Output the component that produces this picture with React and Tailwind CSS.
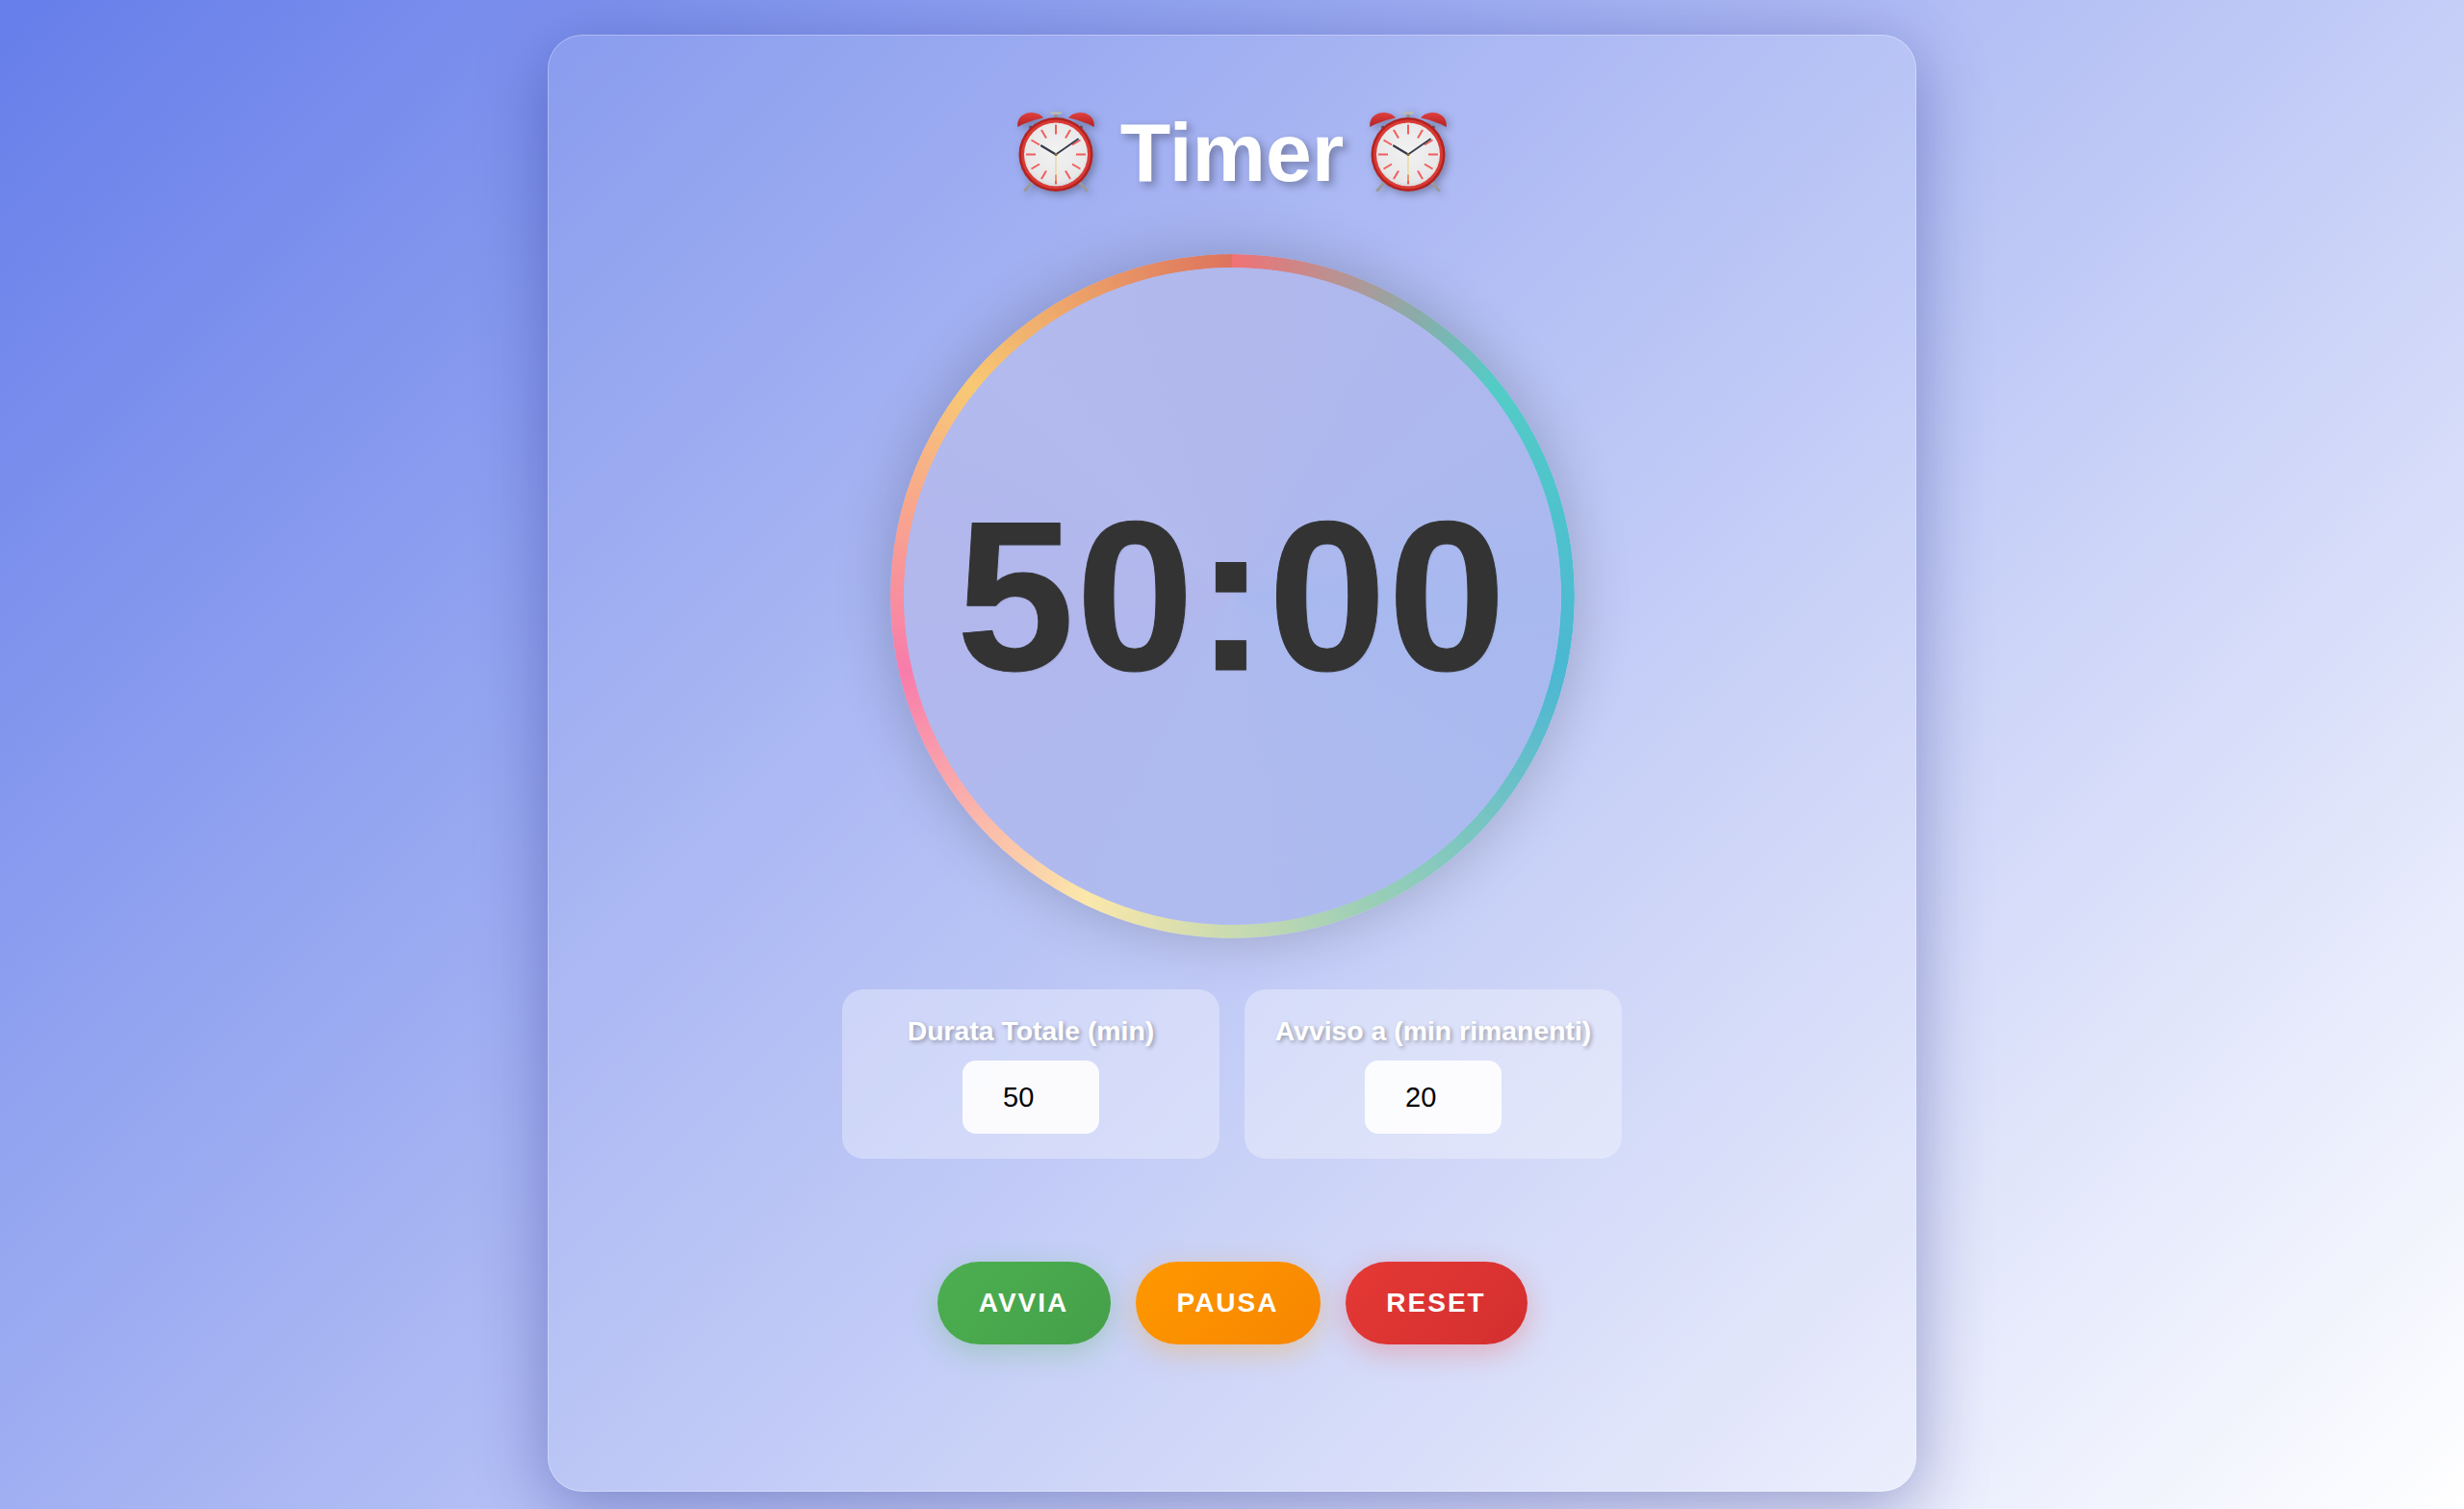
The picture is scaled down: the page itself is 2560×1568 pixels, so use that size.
const AlarmClock = () => (
  <svg viewBox="0 0 80 83" className="w-[80px] h-[83px] shrink-0 -mt-[3px] drop-shadow-[3px_3px_4px_rgba(0,0,0,0.3)]">
    <defs>
      <radialGradient id="face" cx="0.5" cy="0.45" r="0.6">
        <stop offset="0" stopColor="#f2f2f2" />
        <stop offset="0.8" stopColor="#e8e8e8" />
        <stop offset="1" stopColor="#d0d0d0" />
      </radialGradient>
      <linearGradient id="bell" x1="0" y1="0" x2="0" y2="1">
        <stop offset="0" stopColor="#e2403e" />
        <stop offset="1" stopColor="#b02224" />
      </linearGradient>
    </defs>
    <path d="M15.7 73 L8 82" stroke="#9a9a9a" strokeWidth="3" strokeLinecap="round" />
    <path d="M64.3 73 L72 82" stroke="#9a9a9a" strokeWidth="3" strokeLinecap="round" />
    <rect x="34.5" y="0" width="11" height="3" fill="#b8b8b8" />
    <rect x="38.5" y="3" width="3" height="5" fill="#8f8f8f" />
    <path d="M13 15 L16 20" stroke="#555" strokeWidth="3" />
    <path d="M67 15 L64 20" stroke="#555" strokeWidth="3" />
    <path d="M0.5 16 C-1.5 6 8 0 16 1 C21 1.5 25 3.5 27 6.5 C19 8 8 11.5 0.5 16 Z" fill="url(#bell)" />
    <path d="M79.5 16 C81.5 6 72 0 64 1 C59 1.5 55 3.5 53 6.5 C61 8 72 11.5 79.5 16 Z" fill="url(#bell)" />
    <circle cx="40" cy="44.5" r="38.5" fill="#b3231f" />
    <circle cx="40" cy="44.5" r="36" fill="#d93a36" />
    <circle cx="40" cy="44.5" r="33" fill="url(#face)" />
    <g stroke="#f25c5c" strokeWidth="2">
      <path d="M40 13.5 V23.5" />
      <path d="M40 65.5 V75.5" />
      <path d="M9 44.5 H19" />
      <path d="M61 44.5 H71" />
      <path d="M25 19 L30 27.5" />
      <path d="M55 19 L50 27.5" />
      <path d="M25 70 L30 61.5" />
      <path d="M55 70 L50 61.5" />
      <path d="M14.5 29.5 L23 34.5" />
      <path d="M65.5 29.5 L57 34.5" />
      <path d="M14.5 59.5 L23 54.5" />
      <path d="M65.5 59.5 L57 54.5" />
    </g>
    <path d="M40 44.5 V72" stroke="#e8cf7a" strokeWidth="1" />
    <path d="M40 44.5 L25 35.5" stroke="#333a4a" strokeWidth="2.2" strokeLinecap="round" />
    <path d="M40 44.5 L63 28.5" stroke="#333a4a" strokeWidth="1.8" strokeLinecap="round" />
    <circle cx="40" cy="44.5" r="1.6" fill="#8a6a3a" />
  </svg>
)

const Field = ({ label, value }) => (
  <div className="w-[392px] h-[176px] pt-[27px] flex flex-col items-center bg-white/[0.32] rounded-[22px]">
    <label className="text-[28.4px] leading-[32px] font-bold text-white [text-shadow:2px_2px_4px_rgba(0,0,0,0.3)]">{label}</label>
    <input
      type="number"
      defaultValue={value}
      className="mt-[15px] w-[142px] h-[76px] pl-[42px] rounded-[14px] bg-white/90 text-[29px] text-black outline-none"
    />
  </div>
)

const Btn = ({ label, className }) => (
  <button className={`h-[86px] rounded-full text-[28px] font-bold tracking-[2px] text-white flex items-center justify-center ${className}`}>
    {label}
  </button>
)

export default function App() {
  return (
    <div className="h-screen overflow-hidden flex justify-center pt-[36px] bg-[linear-gradient(135deg,#667eea_0%,#ffffff_100%)] font-['Liberation_Sans',Arial,sans-serif]">
      <div className="w-[1422px] h-[1514px] pt-[71px] flex flex-col items-center rounded-[36px] border border-white/30 bg-white/10 shadow-[0_16px_72px_rgba(31,38,135,0.4)]">
        <h1 className="h-[101px] flex items-center justify-center gap-[27px] text-[86px] font-bold text-white [text-shadow:4px_4px_8px_rgba(0,0,0,0.3)]">
          <AlarmClock />
          <span>Timer</span>
          <AlarmClock />
        </h1>

        <div className="relative mt-[55px] w-[711px] h-[711px] rounded-full flex items-center justify-center shadow-[0_0_60px_rgba(0,0,0,0.2)]">
          <div className="absolute inset-0 rounded-full opacity-95 bg-[conic-gradient(#f56f6f,#4ecdc4,#45b7d1,#96ceb4,#ffeaa7,#fd79a8,#fdcb6e,#e17055)] [mask:radial-gradient(closest-side,transparent_calc(100%-14.5px),black_calc(100%-14px))]" />
          <div className="absolute inset-[14px] rounded-full bg-[conic-gradient(#b1b8ec,#aeb8ee_45deg,#a8b9ef_90deg,#abbaef_135deg,#afbbef_180deg,#b0b9ee_225deg,#b2b7ec_270deg,#b2baee_315deg,#b1b8ec)]" />
          <span className="relative text-[220px] leading-none font-bold tracking-[2px] text-[#333] [-webkit-text-stroke:1px_#333] [text-shadow:1px_1px_2px_rgba(0,0,0,0.1)]">50:00</span>
        </div>

        <div className="mt-[53px] flex gap-[26px]">
          <Field label="Durata Totale (min)" value={50} />
          <Field label="Avviso a (min rimanenti)" value={20} />
        </div>

        <div className="mt-[107px] flex gap-[26px]">
          <Btn label="AVVIA" className="w-[180px] bg-[linear-gradient(135deg,#4caf50,#45a049)] shadow-[0_8px_30px_rgba(76,175,80,0.3)]" />
          <Btn label="PAUSA" className="w-[192px] bg-[linear-gradient(135deg,#ff9800,#f68600)] shadow-[0_8px_30px_rgba(255,152,0,0.3)]" />
          <Btn label="RESET" className="w-[189px] bg-[linear-gradient(135deg,#e53935,#d32f2f)] shadow-[0_8px_30px_rgba(244,67,54,0.3)]" />
        </div>
      </div>
    </div>
  )
}
